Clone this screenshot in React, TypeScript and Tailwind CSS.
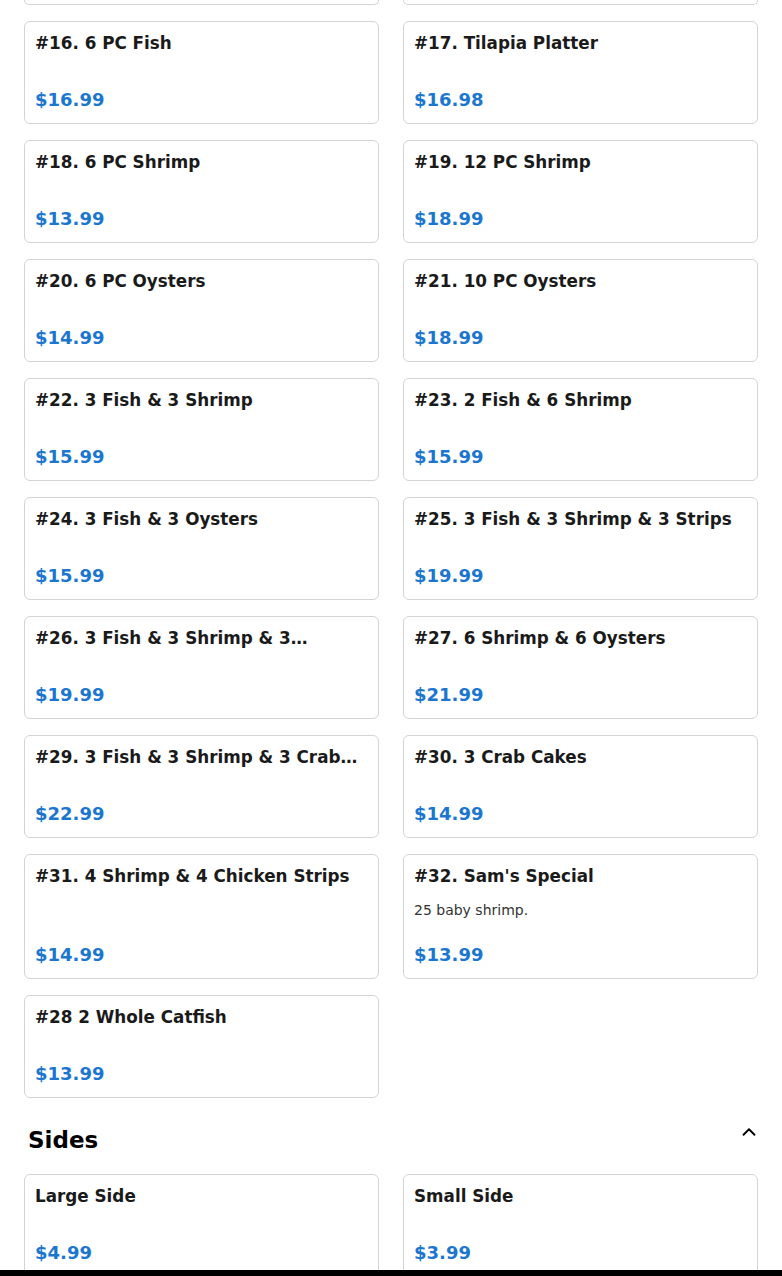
import React from "react";
import { ChevronUp } from "lucide-react";

type Item = { name: string; price: string; desc?: string };

const platters: Item[] = [
  { name: "#16. 6 PC Fish", price: "$16.99" },
  { name: "#17. Tilapia Platter", price: "$16.98" },
  { name: "#18. 6 PC Shrimp", price: "$13.99" },
  { name: "#19. 12 PC Shrimp", price: "$18.99" },
  { name: "#20. 6 PC Oysters", price: "$14.99" },
  { name: "#21. 10 PC Oysters", price: "$18.99" },
  { name: "#22. 3 Fish & 3 Shrimp", price: "$15.99" },
  { name: "#23. 2 Fish & 6 Shrimp", price: "$15.99" },
  { name: "#24. 3 Fish & 3 Oysters", price: "$15.99" },
  { name: "#25. 3 Fish & 3 Shrimp & 3 Strips", price: "$19.99" },
  { name: "#26. 3 Fish & 3 Shrimp & 3 Chicken Wings", price: "$19.99" },
  { name: "#27. 6 Shrimp & 6 Oysters", price: "$21.99" },
  { name: "#29. 3 Fish & 3 Shrimp & 3 Crab Cakes", price: "$22.99" },
  { name: "#30. 3 Crab Cakes", price: "$14.99" },
  { name: "#31. 4 Shrimp & 4 Chicken Strips", price: "$14.99" },
  { name: "#32. Sam's Special", price: "$13.99", desc: "25 baby shrimp." },
  { name: "#28 2 Whole Catfish", price: "$13.99" },
];

const sides: Item[] = [
  { name: "Large Side", price: "$4.99" },
  { name: "Small Side", price: "$3.99" },
];

function MenuCard({ item }: { item: Item }) {
  return (
    <div className="flex flex-col rounded-md border border-[#d4d4d4] bg-white p-[10px]">
      <h3 className="mb-[12px] line-clamp-1 text-[16.8px] leading-[22px] font-bold text-[#1a1a1a]">
        {item.name}
      </h3>
      {item.desc && <p className="text-[14px] leading-[22px] text-[#333]">{item.desc}</p>}
      <div className="min-h-[21px] flex-1" />
      <div className="text-[18px] leading-[26px] font-bold text-[#1b76cf]">{item.price}</div>
    </div>
  );
}

export default function App() {
  return (
    <div
      className="min-h-screen bg-white px-6"
      style={{ fontFamily: '"DejaVu Sans", Verdana, sans-serif' }}
    >
      <div className="grid grid-cols-2 gap-x-6 gap-y-4">
        <div className="h-[5px] rounded-b-md border-x border-b border-[#d4d4d4]" />
        <div className="h-[5px] rounded-b-md border-x border-b border-[#d4d4d4]" />
        {platters.map((p) => (
          <MenuCard key={p.name} item={p} />
        ))}
      </div>

      <div className="mt-6 mb-4 flex items-start justify-between pl-1">
        <h2 className="text-[23px] leading-[36px] font-bold text-black">Sides</h2>
        <ChevronUp size={22} strokeWidth={2} className="-mr-0.5 mt-[-1px] text-black" />
      </div>

      <div className="grid grid-cols-2 gap-x-6 gap-y-4 pb-10">
        {sides.map((s) => (
          <MenuCard key={s.name} item={s} />
        ))}
      </div>

      <div className="fixed right-0 bottom-0 left-0 h-[6px] bg-black" />
    </div>
  );
}
